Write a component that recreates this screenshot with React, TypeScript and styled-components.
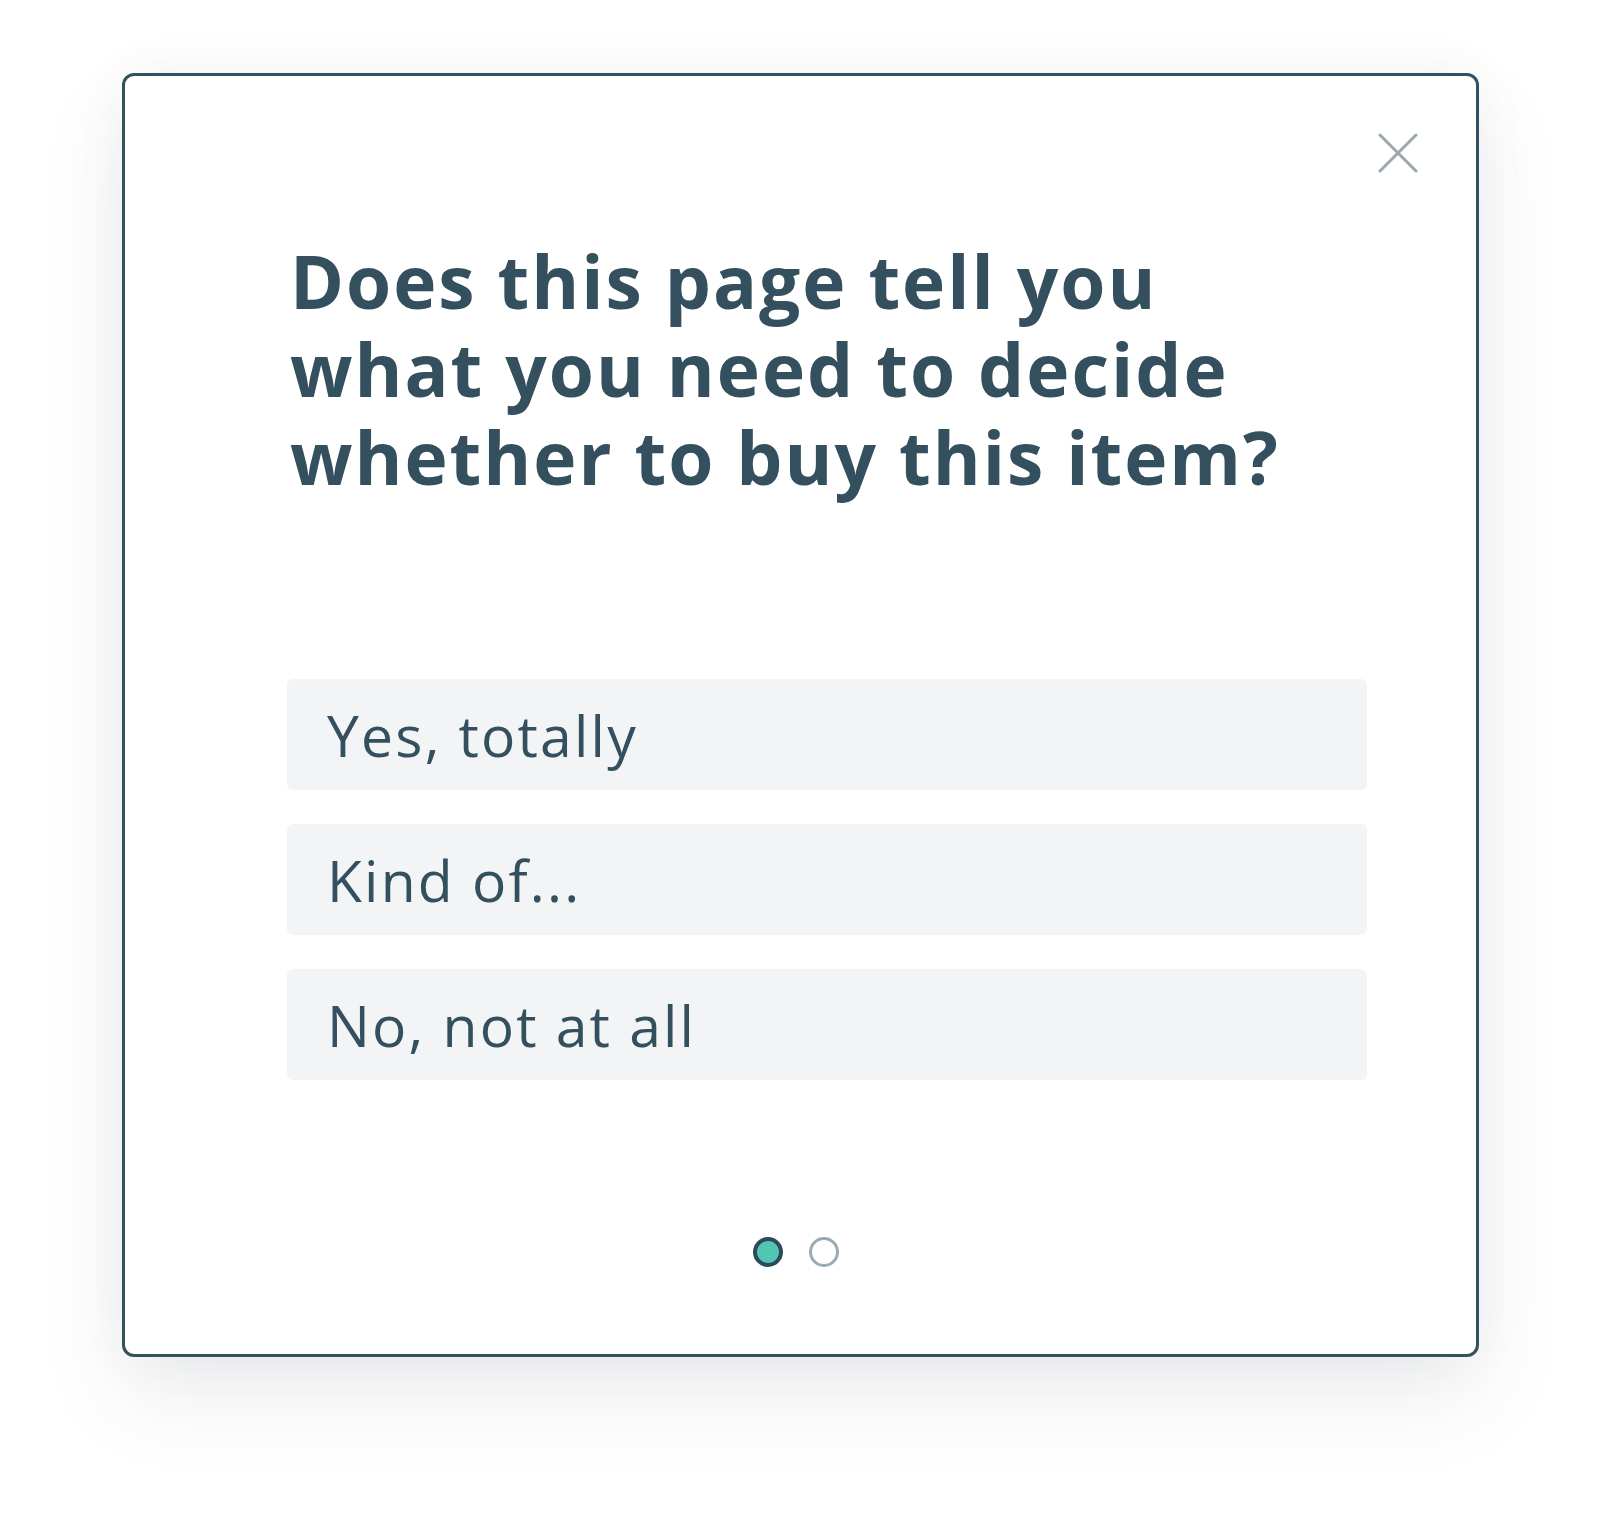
import React, { useState } from 'react';
import styled, { createGlobalStyle } from 'styled-components';

const GlobalStyle = createGlobalStyle`
	html, body {
		margin: 0;
		padding: 0;
		background: #ffffff;
	}
	body {
		font-family: 'Open Sans', 'Lato', sans-serif;
		color: #344f5e;
	}
`;

const Page = styled.div`
	width: 1600px;
	height: 1527px;
	padding: 73px 0 0 122px;
	box-sizing: border-box;
`;

const Card = styled.div`
	position: relative;
	width: 1357px;
	height: 1284px;
	box-sizing: border-box;
	border: 3px solid #35505f;
	border-radius: 12px;
	background: #ffffff;
	box-shadow: 0 40px 90px rgba(40, 55, 70, 0.09), 0 0 60px rgba(40, 55, 70, 0.04);
	display: flex;
	flex-direction: column;
	padding: 0 109px 0 162px;
`;

const CloseButton = styled.button`
	position: absolute;
	top: 57px;
	right: 58px;
	width: 40px;
	height: 40px;
	padding: 0;
	border: none;
	background: none;
	cursor: pointer;
	display: flex;
	align-items: center;
	justify-content: center;
`;

const Question = styled.h1`
	margin: 161px 0 0 3px;
	font-size: 73px;
	line-height: 88px;
	font-weight: 700;
	letter-spacing: 2px;
	color: #344f5e;
	white-space: nowrap;
`;

const Options = styled.div`
	margin-top: 178px;
	display: flex;
	flex-direction: column;
	gap: 34px;
`;

const Option = styled.button`
	height: 111px;
	border: none;
	border-radius: 6px;
	background: #f3f4f6;
	padding: 0 0 0 40px;
	text-align: left;
	font-family: inherit;
	font-size: 57px;
	font-weight: 500;
	letter-spacing: 2.2px;
	color: #344f5e;
	cursor: pointer;
`;

const Dots = styled.div`
	margin-top: auto;
	margin-bottom: 87px;
	margin-left: -172px;
	margin-right: -109px;
	display: flex;
	justify-content: center;
	gap: 26px;
`;

const Dot = styled.span<{ $active?: boolean }>`
	width: 30px;
	height: 30px;
	box-sizing: border-box;
	border-radius: 50%;
	border: ${(p) => (p.$active ? '4px solid #2c4a5a' : '3px solid #9aabb3')};
	background: ${(p) => (p.$active ? '#4fc7b4' : '#ffffff')};
`;

const answers = ['Yes, totally', 'Kind of...', 'No, not at all'];

export default function App() {
	const [page] = useState(0);

	return (
		<>
			<GlobalStyle />
			<Page>
				<Card>
					<CloseButton aria-label="Close">
						<svg width="40" height="40" viewBox="0 0 40 40">
							<path d="M2 2 L38 38 M38 2 L2 38" stroke="#9ba7ae" strokeWidth="3" strokeLinecap="round" />
						</svg>
					</CloseButton>
					<Question>
						Does this page tell you
						<br />
						what you need to decide
						<br />
						whether to buy this item?
					</Question>
					<Options>
						{answers.map((a) => (
							<Option key={a}>{a}</Option>
						))}
					</Options>
					<Dots>
						<Dot $active={page === 0} />
						<Dot $active={page === 1} />
					</Dots>
				</Card>
			</Page>
		</>
	);
}
